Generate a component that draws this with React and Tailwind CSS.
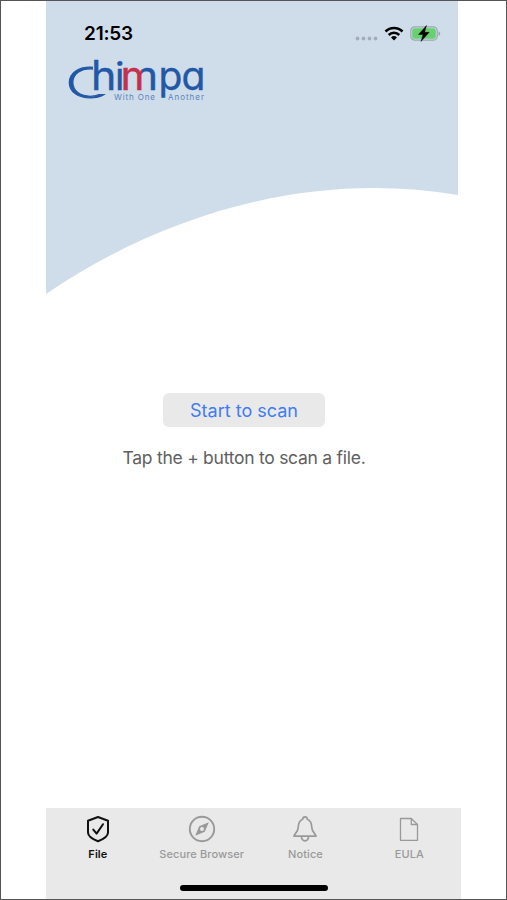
import React, { useState } from "react";

const FileIcon = () => (
  <svg width="24" height="28" viewBox="0 0 24 28" fill="none" stroke="currentColor" strokeWidth="2" strokeLinejoin="round">
    <path d="M12 2 L22 5.7 V17.5 C22 21 16.5 24.5 12 26.3 C7.5 24.5 2 21 2 17.5 V5.7 Z" />
    <path d="M7.3 14.6 L10.6 18.6 L17 9.2" strokeLinecap="round" />
  </svg>
);

const BrowserIcon = () => (
  <svg width="28" height="28" viewBox="0 0 28 28" fill="none" stroke="currentColor">
    <circle cx="14" cy="14" r="12.2" strokeWidth="1.9" />
    <path fill="currentColor" stroke="none" fillRule="evenodd" d="M20.8 7.2 L16.8 16.8 L7.2 20.8 L11.2 11.2 Z M14 12 A2 2 0 1 0 14 16 A2 2 0 1 0 14 12 Z" />
  </svg>
);

const NoticeIcon = () => (
  <svg width="26" height="28" viewBox="0 0 26 28" fill="none" stroke="currentColor" strokeWidth="1.7" strokeLinejoin="round">
    <path d="M2 21.200 C2 18.700 5.900 18.200 6.200 12.500 C6.400 7.500 7.700 5.200 10.700 4.200 C11 1 15 1 15.300 4.200 C18.300 5.200 19.600 7.500 19.800 12.500 C20.100 18.200 24 18.700 24 21.200 Z" />
    <path d="M9.500 21.500 C9.800 27.300 16.200 27.300 16.500 21.500" />
  </svg>
);

const EulaIcon = () => (
  <svg width="20" height="28" viewBox="0 0 20 28" fill="none" stroke="currentColor" strokeWidth="1.3" strokeLinejoin="round">
    <path d="M1.500 3.500 H12.300 L18.500 9.500 V25.300 H1.500 Z" />
    <path d="M12.300 3.500 V9.500 H18.500" />
  </svg>
);

const tabs = [
  { id: "file", label: "File", icon: FileIcon },
  { id: "browser", label: "Secure Browser", icon: BrowserIcon },
  { id: "notice", label: "Notice", icon: NoticeIcon },
  { id: "eula", label: "EULA", icon: EulaIcon },
];

const StatusBar = () => (
  <div className="flex items-center justify-between pl-[38px] pr-[17px] pt-[21px]">
    <span className="text-[19px] leading-[24px] tracking-[-0.2px] font-semibold text-black">21:53</span>
    <div className="flex items-center">
      <svg width="23" height="24" viewBox="0 0 23 24" fill="#a4aebb">
        <circle cx="2.500" cy="16.500" r="1.900" />
        <circle cx="8.500" cy="16.500" r="1.900" />
        <circle cx="14.500" cy="16.500" r="1.900" />
        <circle cx="20.500" cy="16.500" r="1.900" />
      </svg>
      <svg className="ml-[6px]" width="20" height="24" viewBox="0 0 20 24" fill="none" stroke="#000" strokeWidth="2.600">
        <path d="M1.500 9.500 A12 12 0 0 1 18.500 9.500" />
        <path d="M4.700 13 A7.500 7.500 0 0 1 15.300 13" />
        <path d="M7 15.500 A4.300 4.300 0 0 1 13 15.500 L10 18.500 Z" fill="#000" stroke="none" />
      </svg>
      <svg className="ml-[6px]" width="31" height="24" viewBox="0 0 31 24">
        <rect x="0.800" y="4.800" width="26.400" height="13.400" rx="4" fill="none" stroke="#99a7ae" strokeWidth="1.200" />
        <rect x="2.200" y="6.200" width="23.600" height="10.600" rx="2.500" fill="#67d170" />
        <path d="M28.500 9.200 C30.800 10 30.800 13 28.500 13.800 Z" fill="#99a7ae" />
        <path d="M16.500 3.500 L8.500 12.500 H13 L11 19.500 L19.200 10.300 H14.600 Z" fill="#000" stroke="#000" strokeWidth="0.400" />
      </svg>
    </div>
  </div>
);

const Logo = () => (
  <svg className="ml-[20px] mt-[9px]" width="142" height="50" viewBox="66 55 142 50" fontFamily="Inter, sans-serif">
    <defs>
      <linearGradient id="mFill" gradientUnits="userSpaceOnUse" x1="0" y1="0" x2="38" y2="0">
        <stop offset="0.52" stopColor="#c5304c" />
        <stop offset="0.52" stopColor="#2258a6" />
      </linearGradient>
      <clipPath id="cClip">
        <path d="M60 50 H93 V94 H107 V105 H60 Z" />
      </clipPath>
    </defs>
    <g fill="#2258a6" stroke="#2258a6" strokeWidth="0.400" fontSize="39" fontWeight="400" style={{ fontFeatureSettings: "'cv11'" }}>
      <g clipPath="url(#cClip)">
        <text transform="translate(65 97.500) scale(1.600 1)" fontSize="42" fontWeight="200" strokeWidth="1.100">C</text>
      </g>
      <text transform="translate(91 90) scale(1.100 1.040)">h</text>
      <text transform="translate(115 90) scale(1 0.970)">i</text>
      <text transform="translate(120.500 90) scale(1.100 1)" fill="url(#mFill)" stroke="url(#mFill)">m</text>
      <text x="158.500" y="90">p</text>
      <text x="181.500" y="90">a</text>
    </g>
    <g fill="#5a82ba" fontSize="8" fontWeight="400">
      <text x="114" y="99.500" textLength="41">With One</text>
      <text x="168" y="99.500" textLength="36">Another</text>
    </g>
  </svg>
);

const App = () => {
  const [activeTab, setActiveTab] = useState("file");

  return (
    <div className="w-full h-[900px] flex border border-[#555] bg-white pl-[45px] font-[Inter,sans-serif] overflow-hidden">
      <div className="w-[415px] flex flex-col">
        <header className="w-[412px] h-[293px] grid">
          <svg className="col-start-1 row-start-1" width="412" height="293" viewBox="46 1 412 293">
            <path d="M46 1 H458 V195 C327 173 180 203 46 294 Z" fill="#cfddeb" />
          </svg>
          <div className="col-start-1 row-start-1">
            <StatusBar />
            <Logo />
          </div>
        </header>

        <main className="flex-1 w-[396px] flex flex-col items-center pt-[99px]">
          <button className="w-[162px] h-[34px] rounded-[6px] bg-[#e9e9e9] text-[18px] text-[#3f7df0]">
            Start to scan
          </button>
          <p className="mt-[19px] text-[17.500px] leading-[24px] tracking-[-0.26px] text-[#606060]">
            Tap the + button to scan a file.
          </p>
        </main>

        <nav className="h-[91px] bg-[#e9e9e9] flex flex-col items-center">
          <div className="w-full flex">
            {tabs.map(({ id, label, icon: Icon }) => (
              <button
                key={id}
                onClick={() => setActiveTab(id)}
                className={`w-[103.800px] shrink-0 flex flex-col items-center pt-[7px] text-[11px] leading-[14px] tracking-[0.1px] whitespace-nowrap ${
                  activeTab === id ? "font-semibold text-[#111]" : "font-medium text-[#999]"
                }`}
              >
                <Icon />
                <span className="mt-[4px]">{label}</span>
              </button>
            ))}
          </div>
          <div className="w-[148px] h-[6px] mt-[24px] rounded-full bg-black" />
        </nav>
      </div>
    </div>
  );
};

export default App;
